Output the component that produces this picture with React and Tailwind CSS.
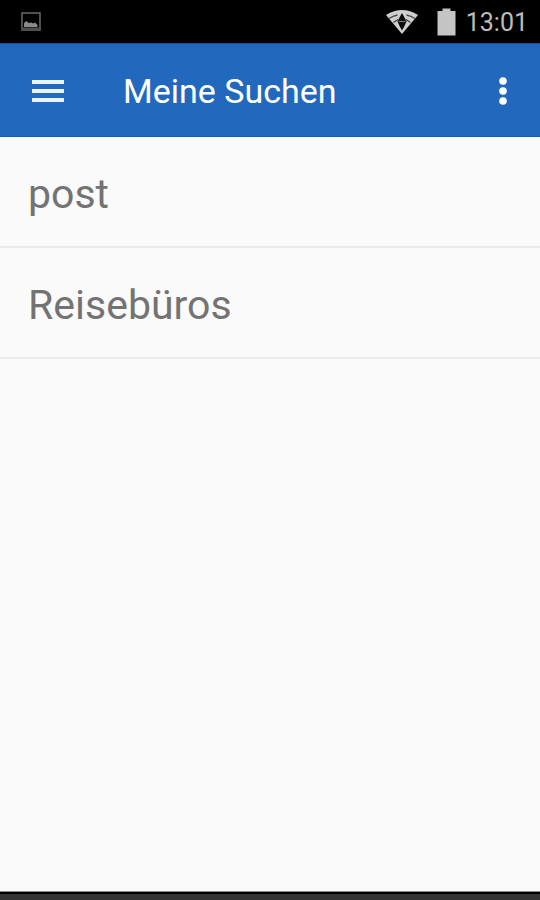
import React from "react";

const searches = ["post", "Reisebüros"];

function PictureIcon() {
  return (
    <svg width="20" height="20" viewBox="0 0 20 20" aria-hidden="true">
      <rect x="1" y="1" width="18" height="17" fill="none" stroke="#6b6b6b" strokeWidth="1.5" />
      <path d="M3 15V11.500Q5 7.500 7.500 11L10 10.500L12 11.500L14 10.500L16.500 13V15Z" fill="#8a8a8a" />
      <path d="M1 15.500H19V18H1Z" fill="#4d4d4d" />
    </svg>
  );
}

function WifiIcon() {
  return (
    <svg width="34" height="26" viewBox="0 0 34 26" aria-hidden="true">
      <path d="M1 6Q17 -4 33 6L17 25Z" fill="#cfcfcf" />
      <path d="M4 9.500Q8 7 12.500 6M21.500 6Q26 7 30 9.500" fill="none" stroke="#4a4a4a" strokeWidth="1.3" />
      <path d="M17 4L19.500 8.500L21.500 12.500L19.500 17L17 21.500L14.500 17L12.500 12.500L14.500 8.500Z" fill="#0a0a0a" />
      <path d="M8.500 13.500L13 10.500M25.500 13.500L21 10.500" stroke="#3a3a3a" strokeWidth="1.2" />
      <path d="M13.500 12.500H20.500" stroke="#777777" strokeWidth="1.2" />
    </svg>
  );
}

function BatteryIcon() {
  return (
    <svg width="19" height="28" viewBox="0 0 19 28" aria-hidden="true">
      <path d="M5.500 0.500H13.500V3H18.500V27.500H0.500V3H5.500Z" fill="#c4c4c4" />
    </svg>
  );
}

function StatusBar() {
  return (
    <div className="flex h-[43px] shrink-0 items-center justify-between bg-black pt-px pr-3 pl-[21px]">
      <PictureIcon />
      <div className="flex items-center">
        <WifiIcon />
        <div className="ml-[18px]">
          <BatteryIcon />
        </div>
        <span className="ml-2.5 pt-0.5 text-[25px] leading-8 text-[#bdbdbd]">13:01</span>
      </div>
    </div>
  );
}

function AppBar() {
  return (
    <header className="flex h-[94px] shrink-0 items-center border-t border-b border-t-[#1c4f8c] border-b-[#1a5cab] bg-[#2268bd] px-8 pt-px text-white">
      <button type="button" aria-label="Menü" className="shrink-0">
        <svg width="32" height="24" viewBox="0 0 32 24" className="block">
          <path d="M0 3H32M0 12H32M0 21H32" stroke="#e9f2ff" strokeWidth="4" />
        </svg>
      </button>
      <h1 className="ml-[59px] flex-1 text-[34px] leading-10">Meine Suchen</h1>
      <button type="button" aria-label="Weitere Optionen" className="shrink-0">
        <svg width="10" height="30" viewBox="0 0 10 30" className="block" fill="currentColor">
          <circle cx="5" cy="5" r="3.800" />
          <circle cx="5" cy="15" r="3.800" />
          <circle cx="5" cy="25" r="3.800" />
        </svg>
      </button>
    </header>
  );
}

export default function App() {
  return (
    <div className="flex min-h-screen flex-col bg-[#fafafa] font-['Roboto',sans-serif]">
      <StatusBar />
      <AppBar />
      <main className="flex-1">
        <ul>
          {searches.map((name) => (
            <li key={name} className="border-b-2 border-[#ebebeb]">
              <button type="button" className="block w-full px-7 pt-[35px] pb-[29px] text-left text-[41px] leading-[45px] text-[#737373]">
                {name}
              </button>
            </li>
          ))}
        </ul>
      </main>
      <div className="h-[9px] shrink-0 border-t border-[#8a8a8a] bg-black pt-0.5">
        <div className="h-full bg-[#333333]" />
      </div>
    </div>
  );
}
